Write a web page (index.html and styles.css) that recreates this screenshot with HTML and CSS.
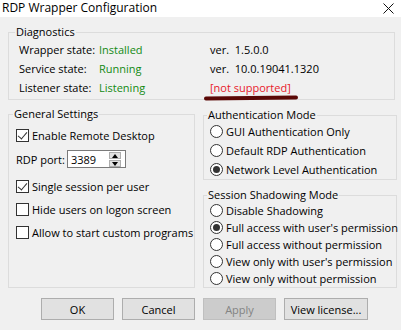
FILE: index.html
```html
<!DOCTYPE html>
<html>
<head>
<meta charset="utf-8">
<link rel="stylesheet" href="styles.css">
</head>
<body>
<div class="window">
  <div class="titlebar">
    <span class="title">RDP Wrapper Configuration</span>
    <svg class="close" width="11" height="11" viewBox="0 0 11 11"><path d="M0.5 0.5 L10.5 10.5 M10.5 0.5 L0.5 10.5" stroke="#111" stroke-width="1" fill="none"/></svg>
  </div>
  <div class="content">
    <fieldset class="group diag">
      <legend>Diagnostics</legend>
      <div class="diag-grid">
        <span>Wrapper state:</span><span class="ok">Installed</span><span>ver.&nbsp; 1.5.0.0</span>
        <span>Service state:</span><span class="ok">Running</span><span>ver.&nbsp; 10.0.19041.1320</span>
        <span>Listener state:</span><span class="ok">Listening</span><span class="bad">[not supported]<i class="scribble"></i></span>
      </div>
    </fieldset>

    <div class="columns">
      <fieldset class="group general">
        <legend>General Settings</legend>
        <label class="row r1"><span class="check on"></span>Enable Remote Desktop</label>
        <div class="row r2 port">
          <span>RDP port:</span>
          <span class="spin"><span class="spin-val">3389</span><span class="spin-btns"><span class="sb up"></span><span class="sb down"></span></span></span>
        </div>
        <label class="row r3"><span class="check on"></span>Single session per user</label>
        <label class="row r4"><span class="check"></span>Hide users on logon screen</label>
        <label class="row r5"><span class="check"></span>Allow to start custom programs</label>
      </fieldset>

      <div class="rightcol">
        <fieldset class="group auth">
          <legend>Authentication Mode</legend>
          <label class="radio-row"><span class="radio"></span>GUI Authentication Only</label>
          <label class="radio-row"><span class="radio"></span>Default RDP Authentication</label>
          <label class="radio-row"><span class="radio on"></span>Network Level Authentication</label>
        </fieldset>
        <fieldset class="group shadow">
          <legend>Session Shadowing Mode</legend>
          <label class="radio-row sm"><span class="radio"></span>Disable Shadowing</label>
          <label class="radio-row sm"><span class="radio on"></span>Full access with user's permission</label>
          <label class="radio-row sm"><span class="radio"></span>Full access without permission</label>
          <label class="radio-row sm"><span class="radio"></span>View only with user's permission</label>
          <label class="radio-row sm"><span class="radio"></span>View only without permission</label>
        </fieldset>
      </div>
    </div>

    <div class="buttons">
      <button class="btn">OK</button>
      <button class="btn">Cancel</button>
      <button class="btn disabled">Apply</button>
      <button class="btn wide">View license...</button>
    </div>
  </div>
</div>
</body>
</html>
```

FILE: styles.css
```css
* { box-sizing: border-box; }
html, body { margin: 0; padding: 0; }
body {
  width: 401px;
  height: 330px;
  overflow: hidden;
  background: #f0f0f0;
  font-family: "Open Sans", "Noto Sans", sans-serif;
  font-size: 11px;
  color: #000;
  white-space: nowrap;
}
.titlebar {
  height: 17px;
  background: #fff;
  display: flex;
  align-items: flex-start;
  justify-content: space-between;
  padding: 0 7px 0 2px;
}
.title { font-size: 12px; line-height: 16px; }
.close { margin-top: 3px; }
.content { padding: 8px 6px 0 8px; }
.group {
  margin: 0;
  border: 1px solid #dcdcdc;
  padding: 0 2px 0 9px;
  min-width: 0;
}
.group legend {
  padding: 0 1px;
  margin-left: -3px;
  line-height: 14px;
  height: 14px;
}
.diag-grid {
  display: grid;
  grid-template-columns: 80px 111px auto;
  grid-auto-rows: 19px;
  align-items: center;
  padding-top: 1px;
  padding-bottom: 2px;
  padding-left: 1px;
}
.ok { color: #138a13; }
.bad { color: #e8202a; position: relative; }
.scribble {
  position: absolute;
  left: -6px;
  top: 16px;
  width: 94px;
  height: 4px;
  background: #5a0806;
  border-radius: 2px;
  transform: rotate(-0.6deg);
}
.columns {
  display: grid;
  grid-template-columns: 187px 194px;
  column-gap: 8px;
  margin-top: 7px;
}
.general { padding-left: 7px; }
.row { display: flex; align-items: center; height: 18px; }
.r1 { margin-top: 5px; }
.r2 { margin-top: 6px; }
.r3 { margin-top: 9px; }
.r4 { margin-top: 5px; }
.r5 { margin-top: 5px; }
.check {
  width: 13px; height: 13px;
  border: 1px solid #333;
  background: #fff;
  margin-right: 3px;
  flex: none;
  position: relative;
}
.check.on::after {
  content: "";
  position: absolute;
  left: 3px; top: 0px;
  width: 4px; height: 8px;
  border: solid #333;
  border-width: 0 1px 1px 0;
  transform: rotate(40deg);
}
.port span:first-child { margin-right: 2px; }
.spin {
  width: 59px; height: 18px;
  border: 1px solid #7a7a7a;
  background: #fff;
  display: flex;
  align-items: center;
  justify-content: space-between;
  padding: 0 2px 0 3px;
}
.spin-btns { display: flex; flex-direction: column; gap: 1px; }
.sb {
  width: 12px; height: 7px;
  background: #e1e1e1;
  border: 1px solid #adadad;
  position: relative;
}
.sb::after {
  content: "";
  position: absolute;
  left: 2px;
  border-left: 3px solid transparent;
  border-right: 3px solid transparent;
}
.sb.up::after { top: 1px; border-bottom: 4px solid #000; }
.sb.down::after { top: 1px; border-top: 4px solid #000; }
.rightcol { display: flex; flex-direction: column; margin-top: 1px; }
.auth { padding-left: 6px; }
.radio-row { display: flex; align-items: center; height: 19px; }
.radio-row.sm { height: 17px; }
.shadow { margin-top: 8px; flex: 1; padding-left: 6px; padding-top: 0; }
.radio {
  width: 13px; height: 13px;
  border: 1px solid #333;
  border-radius: 50%;
  background: #fff;
  margin-right: 3px;
  flex: none;
  position: relative;
}
.radio.on::after {
  content: "";
  position: absolute;
  left: 2px; top: 2px;
  width: 7px; height: 7px;
  border-radius: 50%;
  background: #333;
}
.buttons {
  display: flex;
  gap: 8px;
  padding-left: 33px;
  margin-top: 10px;
}
.btn {
  width: 73px;
  height: 22px;
  background: #e1e1e1;
  border: 1px solid #adadad;
  font-family: inherit;
  font-size: 11px;
  color: #000;
  padding: 0;
}
.btn.wide { width: 84px; }
.btn.disabled { background: #cccccc; border-color: #bfbfbf; color: #838383; }
```
